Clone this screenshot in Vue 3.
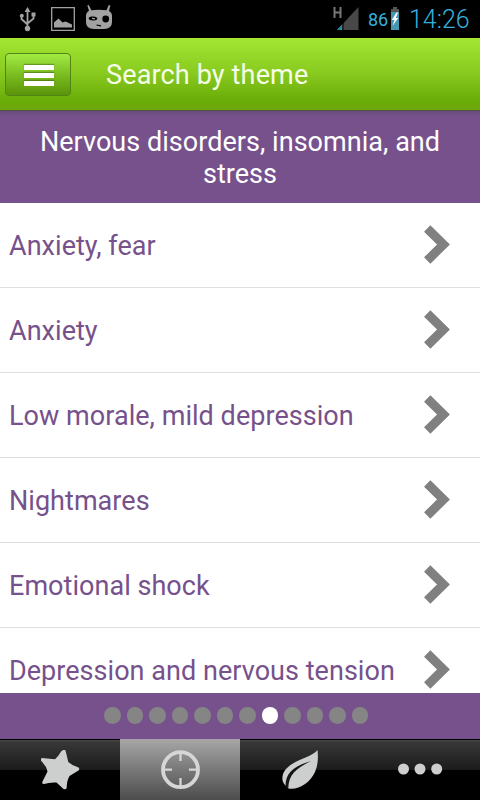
<script setup>
const topics = [
  'Anxiety, fear',
  'Anxiety',
  'Low morale, mild depression',
  'Nightmares',
  'Emotional shock',
  'Depression and nervous tension',
]

const pageCount = 12
const currentPage = 8
</script>

<template>
  <div class="screen">
    <div class="status-bar">
      <svg class="notifications" viewBox="0 0 120 38" width="120" height="38">
        <g fill="none" stroke="#a2a2a2" stroke-width="1.800">
          <path d="M27.500 10v18M21.500 16v3l6 5.500M33.500 15v3.500l-6 5" />
          <path stroke-width="1.300" d="M51.700 7.700h22.600v22.600H51.700z" />
        </g>
        <g fill="#a2a2a2">
          <path d="M27.500 7l3 5h-6z" />
          <circle cx="27.500" cy="28.500" r="2.700" />
          <circle cx="21.800" cy="15.800" r="2" />
          <path d="M31.500 12.500h4v4h-4zM54 27.500v-5l4.500-4 4 4 3-1 6.500 3v3z" />
          <path d="M88.800 5l2.500 5.300Q99 9 106.500 10.300L108.800 5l1.500.5-1.300 5.500q3 1.500 3 5v6q0 7-8 7H94q-8 0-8-7v-6q0-3.500 3-5.200L87.300 5.500z" />
        </g>
        <ellipse cx="93" cy="18.500" rx="4.300" ry="2" fill="#000" transform="rotate(5 93 18.500)" />
        <circle cx="105.700" cy="19" r="3.400" fill="#000" />
        <path d="M92 18.300l3 .5" stroke="#a2a2a2" stroke-width="1.200" />
        <path d="M96.500 25l4.500.8" stroke="#000" stroke-width="1.200" />
      </svg>
      <div class="system">
        <svg class="signal" viewBox="0 0 26 38" width="26" height="38">
          <path d="M25.500 7v23H4z" fill="#484848" />
          <path d="M9 24.500V30H4z" fill="#2489a8" />
          <path d="M10 23v7" stroke="#000" stroke-width="1" />
          <path d="M1.500 7v11M7.500 7v11M1.500 12.500h6" fill="none" stroke="#777" stroke-width="2" />
        </svg>
        <span class="battery-level">86</span>
        <svg class="battery" viewBox="0 0 8 38" width="8" height="38">
          <path d="M2 7h4v2h2v4H0V9h2z" fill="#555" />
          <path d="M0 12h8v18H0z" fill="#4596ae" />
          <path d="M5.500 12.500L.8 20h2.700L1.500 26l5.700-8H4.800L7 12.500z" fill="#fff" />
        </svg>
        <span class="clock">14:26</span>
      </div>
    </div>

    <header class="app-bar">
      <button class="menu-button" aria-label="Menu">
        <span />
        <span />
        <span />
      </button>
      <h1>Search by theme</h1>
    </header>

    <h2 class="category">
      Nervous disorders, insomnia, and stress
    </h2>

    <ul class="topics">
      <li v-for="topic in topics" :key="topic">
        <span>{{ topic }}</span>
        <svg viewBox="0 0 28 40" width="28" height="40">
          <path d="M3.200 3.500L19.500 19.500 3.200 35.500" fill="none" stroke="#808080" stroke-width="9" />
        </svg>
      </li>
    </ul>

    <div class="pager">
      <i v-for="page in pageCount" :key="page" :class="{ current: page === currentPage }" />
    </div>

    <nav class="tabs">
      <a class="tab">
        <svg viewBox="0 0 40 40" width="40" height="40">
          <path d="M21.500 1Q24-1 25.500.5L28.300 12Q32 15.500 38.500 17.500Q40 19.200 38.500 20.500L29.500 26Q26.700 31 26.700 38Q25.500 40 23.500 39L16.500 32.500Q10 32 4 34Q1.500 34 2.500 31.500L7.500 21.500Q6.500 16 1.200 11Q.5 8.500 2 8L15 9.200Q18.500 6 21.500 1z" fill="#cdcfce" />
        </svg>
      </a>
      <a class="tab active">
        <svg viewBox="0 0 40 40" width="40" height="40" fill="none" stroke="#d6d6d6">
          <circle cx="20.500" cy="19.700" r="17.500" stroke-width="3.800" />
          <path d="M20.500 3v8M20.500 28v8M4 19.700h8M29 19.700h8" stroke-width="2.300" />
        </svg>
      </a>
      <a class="tab">
        <svg viewBox="0 0 40 40" width="40" height="40" fill="#cdcfce">
          <path d="M37.500 0C31 8 15 9 6 19 1 25 1.500 32 5.500 35.500L8.500 38.500C19 40 30 33 35 22Q39 13 37.500 0z" />
          <path d="M5.500 36.500C5.500 23 13 16.500 31 11 17 18 8.500 24 8.300 38.500z" fill="#151515" />
        </svg>
      </a>
      <a class="tab">
        <svg viewBox="0 0 46 40" width="46" height="40" fill="#cdcfce">
          <circle cx="6.500" cy="19" r="5.500" />
          <circle cx="23" cy="19" r="5.500" />
          <circle cx="39.700" cy="19" r="5.500" />
        </svg>
      </a>
    </nav>
  </div>
</template>

<style>
body {
  margin: 0;
}
</style>

<style scoped>
.screen {
  display: flex;
  flex-direction: column;
  width: 480px;
  height: 800px;
  overflow: hidden;
  background: #fff;
  font-family: Roboto, sans-serif;
}

.status-bar {
  display: flex;
  justify-content: space-between;
  flex: 0 0 38px;
  background: #000;
  color: #35b0dc;
}

.system {
  display: flex;
  align-items: center;
  padding-right: 10px;
}

.battery-level {
  width: 20px;
  margin: 1px 3px 0 9px;
  font-size: 18px;
}

.clock {
  width: 61px;
  margin: 1px 0 0 10px;
  font-size: 25px;
  font-weight: 300;
  white-space: nowrap;
}

.app-bar {
  display: flex;
  align-items: center;
  flex: 0 0 73px;
  box-sizing: border-box;
  padding: 0 5px 1px;
  border-bottom: 1px solid #575044;
  background: linear-gradient(#a5e733, #87c91e 50%, #6aac08 88%, #70a70c);
}

.menu-button {
  display: flex;
  flex-direction: column;
  align-items: center;
  justify-content: center;
  gap: 3px;
  box-sizing: border-box;
  width: 66px;
  height: 43px;
  margin: 1px 0 0;
  padding: 2px 0 0 1px;
  border: 1px solid #528516;
  border-radius: 4px;
  background: linear-gradient(#a2eb43, #77b91e 55%, #5b9409);
}

.menu-button span {
  width: 30px;
  height: 5px;
  background: #fff;
  box-shadow: 0 -1px 1px rgba(60, 90, 20, 0.5);
}

.app-bar h1 {
  margin: 3px 0 0 35px;
  color: #f5fde9;
  font-size: 27px;
  font-weight: 400;
  letter-spacing: 0.15px;
}

.category {
  display: flex;
  align-items: center;
  flex: 0 0 92px;
  box-sizing: border-box;
  margin: 0;
  padding: 2px 30px 0;
  background: linear-gradient(#694c80, #76518b 6px);
  color: #fff;
  font-size: 27px;
  font-weight: 400;
  letter-spacing: 0.04px;
  line-height: 32px;
  text-align: center;
}

.topics {
  flex: 0 0 490px;
  overflow: hidden;
  margin: 0;
  padding: 0;
  list-style: none;
}

.topics li {
  display: flex;
  align-items: center;
  justify-content: space-between;
  box-sizing: border-box;
  height: 85px;
  padding: 0 28px 1px 9px;
  border-bottom: 1px solid #dfdfdf;
  color: #76518b;
  font-size: 27px;
  letter-spacing: 0.04px;
  white-space: nowrap;
}

.topics span {
  padding-top: 2px;
}

.pager {
  display: flex;
  align-items: center;
  justify-content: center;
  gap: 6px;
  flex: 0 0 46px;
  box-sizing: border-box;
  padding: 0 8px 1px 0;
  background: #76518b;
}

.pager i {
  width: 16.5px;
  height: 16.5px;
  border-radius: 50%;
  background: #858585;
}

.pager .current {
  background: #fff;
}

.tabs {
  display: grid;
  grid-template-columns: repeat(4, 1fr);
  flex: 1;
}

.tab {
  display: flex;
  align-items: center;
  justify-content: center;
  box-sizing: border-box;
  border-top: 1px solid #000;
  background: linear-gradient(#4a4a4a, #383838 2px, #1b1b1b 30px, #000 30px);
}

.tab.active {
  border-top-color: #aaa0b0;
  background: linear-gradient(#a5a5a5, #4c4c4c);
}
</style>
